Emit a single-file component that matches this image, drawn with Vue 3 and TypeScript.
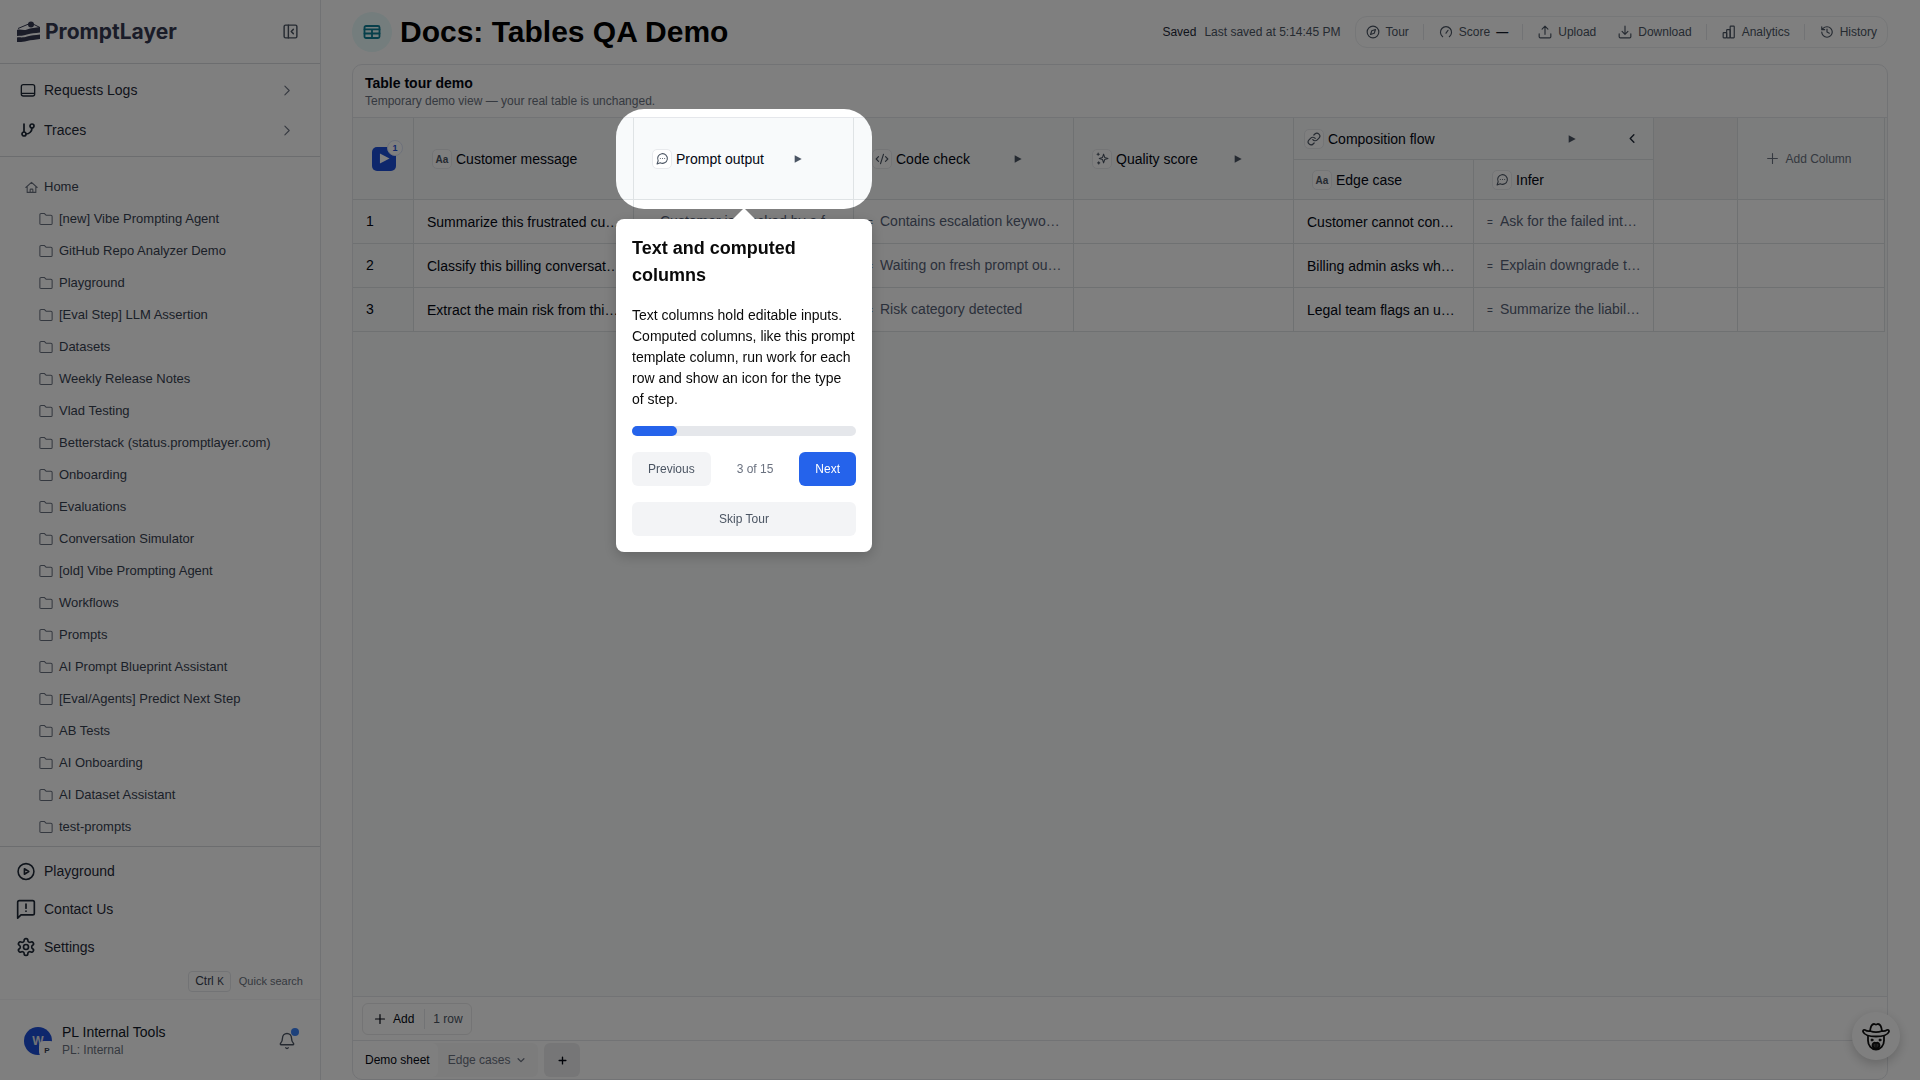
<script setup lang="ts">
import { h, type FunctionalComponent } from 'vue'

const glyphs: Record<string, string> = {
  collapse: '<rect x="3" y="3" width="18" height="18" rx="2"/><path d="M9 3v18M16 9l-3 3 3 3"/>',
  logs: '<rect x="2" y="4" width="20" height="17" rx="3"/><path d="M2.500 17h19"/>',
  branch: '<path d="M6 3v12M18 9a9 9 0 0 1-9 9"/><circle cx="18" cy="6" r="3"/><circle cx="6" cy="18" r="3"/>',
  right: '<path d="m9 4 8 8-8 8"/>',
  left: '<path d="m15 4-8 8 8 8"/>',
  down: '<path d="m5 9 7 7 7-7"/>',
  home: '<path d="m1.500 12 10.500-9.500L22.500 12M4 10v11h16V10M9.500 21v-5a1 1 0 0 1 1-1h3a1 1 0 0 1 1 1v5"/>',
  folder: '<path d="M1.500 19.500v-15a2 2 0 0 1 2-2h5.500l3 3h8.500a2 2 0 0 1 2 2v12a2 2 0 0 1-2 2h-17a2 2 0 0 1-2-2z"/>',
  playCircle: '<circle cx="12" cy="12" r="10"/><path d="m10 8.500 5.500 3.500-5.500 3.500z"/>',
  contact: '<path d="M22 17a2 2 0 0 1-2 2H6l-4 4V4a2 2 0 0 1 2-2h16a2 2 0 0 1 2 2zM12 6v5M12 14.500v.1"/>',
  gear: '<path d="M12.220 2h-.44a2 2 0 0 0-2 2v.18a2 2 0 0 1-1 1.730l-.43.25a2 2 0 0 1-2 0l-.15-.08a2 2 0 0 0-2.730.73l-.22.38a2 2 0 0 0 .73 2.730l.15.1a2 2 0 0 1 1 1.720v.51a2 2 0 0 1-1 1.740l-.15.09a2 2 0 0 0-.73 2.730l.22.38a2 2 0 0 0 2.730.73l.15-.08a2 2 0 0 1 2 0l.43.25a2 2 0 0 1 1 1.730V20a2 2 0 0 0 2 2h.44a2 2 0 0 0 2-2v-.18a2 2 0 0 1 1-1.730l.43-.25a2 2 0 0 1 2 0l.15.08a2 2 0 0 0 2.730-.73l.22-.39a2 2 0 0 0-.73-2.730l-.15-.08a2 2 0 0 1-1-1.740v-.5a2 2 0 0 1 1-1.740l.15-.09a2 2 0 0 0 .73-2.730l-.22-.38a2 2 0 0 0-2.730-.73l-.15.08a2 2 0 0 1-2 0l-.43-.25a2 2 0 0 1-1-1.730V4a2 2 0 0 0-2-2z"/><circle cx="12" cy="12" r="3"/>',
  bell: '<path d="M10.300 21a1.940 1.940 0 0 0 3.400 0M3.300 15.300A1 1 0 0 0 4 17h16a1 1 0 0 0 .7-1.700C19.400 14 18 12.500 18 8A6 6 0 0 0 6 8c0 4.500-1.400 6-2.700 7.300"/>',
  compass: '<circle cx="12" cy="12" r="10"/><path d="m16.200 7.800-2.100 6.300-6.300 2.100 2.100-6.300z"/>',
  gauge: '<path d="m12 14 3.500-5M6.300 20a9.500 9.500 0 1 1 11.400 0"/>',
  upload: '<path d="M12 16V2M7 7l5-5 5 5M2 15v5a2 2 0 0 0 2 2h16a2 2 0 0 0 2-2v-5"/>',
  download: '<path d="M12 2v14M7 11l5 5 5-5M2 15v5a2 2 0 0 0 2 2h16a2 2 0 0 0 2-2v-5"/>',
  chart: '<rect x="2" y="13" width="6" height="9" rx="1"/><rect x="8" y="8" width="6" height="14" rx="1"/><rect x="14" y="2" width="7" height="20" rx="1"/>',
  history: '<path d="M3 12a9 9 0 1 0 9-9 9.750 9.750 0 0 0-6.740 2.740L3 8M3 3v5h5M12 7v5l4 2"/>',
  chat: '<path d="M7.900 20A9 9 0 1 0 4 16.100L2 22zM8 12h.01M12 12h.01M16 12h.01"/>',
  code: '<path d="m18 16 4-4-4-4M6 8l-4 4 4 4M14.500 4l-5 16"/>',
  sparkle: '<path d="M14 4l2 6 6 2-6 2-2 6-2-6-6-2 6-2zM4 2v4M2 4h4M5 18v4M3 20h4"/>',
  link: '<path d="M10 13a5 5 0 0 0 7.540.54l3-3a5 5 0 0 0-7.070-7.070l-1.720 1.710M14 11a5 5 0 0 0-7.540-.54l-3 3a5 5 0 0 0 7.070 7.070l1.710-1.710"/>',
  plus: '<path d="M12 3v18M3 12h18"/>',
  play: '<path d="M2 1v22l21-11z" fill="currentColor" stroke="none"/>',
  table: '<rect x="2" y="4" width="20" height="16" rx="2"/><path d="M2 8.500h20M2 14h20M12 8.500V20"/>',
}

interface IconProps { name: string; size: number; weight?: number }

const Icon: FunctionalComponent<IconProps> = (props) =>
  h('svg', {
    width: props.size,
    height: props.size,
    viewBox: '0 0 24 24',
    fill: 'none',
    stroke: 'currentColor',
    'stroke-width': props.weight ?? 2,
    'stroke-linecap': 'round',
    'stroke-linejoin': 'round',
    'aria-hidden': 'true',
    innerHTML: glyphs[props.name],
  })
Icon.props = ['name', 'size', 'weight']

const folders: string[] = [
  '[new] Vibe Prompting Agent', 'GitHub Repo Analyzer Demo', 'Playground', '[Eval Step] LLM Assertion',
  'Datasets', 'Weekly Release Notes', 'Vlad Testing', 'Betterstack (status.promptlayer.com)',
  'Onboarding', 'Evaluations', 'Conversation Simulator', '[old] Vibe Prompting Agent', 'Workflows',
  'Prompts', 'AI Prompt Blueprint Assistant', '[Eval/Agents] Predict Next Step', 'AB Tests',
  'AI Onboarding', 'AI Dataset Assistant', 'test-prompts',
]

const rows = [
  { message: 'Summarize this frustrated cu…', output: 'Customer is blocked by a f…', check: 'Contains escalation keywo…', edge: 'Customer cannot con…', infer: 'Ask for the failed int…' },
  { message: 'Classify this billing conversat…', output: '', check: 'Waiting on fresh prompt ou…', edge: 'Billing admin asks wh…', infer: 'Explain downgrade t…' },
  { message: 'Extract the main risk from thi…', output: '', check: 'Risk category detected', edge: 'Legal team flags an u…', infer: 'Summarize the liabil…' },
]

const step = 3
const total = 15
</script>

<template>
  <div class="app">
    <aside class="sidebar">
      <header class="brand">
        <a href="#" class="logo">
          <svg class="cake" width="24" height="22" viewBox="0 0 24 22" aria-hidden="true">
            <path d="M1 7.500 14 2l9 4.500" fill="none" stroke="currentColor" />
            <circle cx="14" cy="3.500" r="3" fill="currentColor" />
            <path d="M0 9c3-1.500 6 1 10-.5S18 7 23 6v5.500c-5 1-9 .5-13 2S3 14.500 0 15z" fill="currentColor" />
            <path d="M0 16.500c3-.5 6 .5 10-1s8-1 13-2V18c-5 1-9 .8-13 2s-7 1-10 1z" fill="currentColor" />
          </svg>
          <span>PromptLayer</span>
        </a>
        <button class="ghost" aria-label="Collapse sidebar"><Icon name="collapse" :size="17" /></button>
      </header>

      <nav class="primary">
        <a href="#" class="nav-row"><Icon name="logs" :size="16" /><span>Requests Logs</span><Icon class="chev" name="right" :size="13" /></a>
        <a href="#" class="nav-row"><Icon name="branch" :size="16" :weight="2.600" /><span>Traces</span><Icon class="chev" name="right" :size="13" /></a>
      </nav>

      <nav class="tree">
        <a href="#" class="tree-row root"><Icon name="home" :size="13" /><span>Home</span></a>
        <a v-for="f in folders" :key="f" href="#" class="tree-row"><Icon name="folder" :size="14" :weight="1.800" /><span>{{ f }}</span></a>
      </nav>

      <nav class="secondary">
        <a href="#" class="side-row"><Icon name="playCircle" :size="19" /><span>Playground</span></a>
        <a href="#" class="side-row"><Icon name="contact" :size="20" /><span>Contact Us</span></a>
        <a href="#" class="side-row"><Icon name="gear" :size="20" /><span>Settings</span></a>
        <div class="search"><kbd>Ctrl <small>K</small></kbd><span>Quick search</span></div>
      </nav>

      <footer class="account">
        <div class="avatar">W<span class="avatar-tag">P</span></div>
        <div class="who"><strong>PL Internal Tools</strong><span>PL: Internal</span></div>
        <button class="ghost bell" aria-label="Notifications"><Icon name="bell" :size="18" :weight="1.800" /><i></i></button>
      </footer>
    </aside>

    <main class="main">
      <header class="topbar">
        <span class="sheet-icon"><Icon name="table" :size="18" :weight="2.400" /></span>
        <h1>Docs: Tables QA Demo</h1>
        <span class="saved"><b>Saved</b><span>Last saved at 5:14:45 PM</span></span>
        <div class="toolbar">
          <button><Icon name="compass" :size="14" />Tour</button>
          <hr />
          <button><Icon name="gauge" :size="14" />Score <b>—</b></button>
          <hr />
          <button><Icon name="upload" :size="14" />Upload</button>
          <button><Icon name="download" :size="14" />Download</button>
          <hr />
          <button><Icon name="chart" :size="14" />Analytics</button>
          <hr />
          <button><Icon name="history" :size="14" />History</button>
        </div>
      </header>

      <section class="panel">
        <div class="panel-title">
          <h2>Table tour demo</h2>
          <p>Temporary demo view — your real table is unchanged.</p>
        </div>

        <div class="grid-area">
          <table>
            <colgroup>
              <col class="c-num" /><col class="c-wide" /><col class="c-wide" /><col class="c-wide" /><col class="c-wide" />
              <col class="c-mid" /><col class="c-mid" /><col class="c-gap" /><col />
            </colgroup>
            <thead>
              <tr class="h-top">
                <th rowspan="2">
                  <button class="run-all" aria-label="Run all"><Icon name="play" :size="11" /><span>1</span></button>
                </th>
                <th rowspan="2"><div class="head"><span class="kind">Aa</span><span>Customer message</span></div></th>
                <th rowspan="2" class="anchor">
                  <div class="head"><span class="kind"><Icon name="chat" :size="13" /></span><span>Prompt output</span><button class="run run-a" aria-label="Run column"><Icon name="play" :size="8" /></button></div>
                  <div class="spotlight"></div>
                  <div class="tour" role="dialog" aria-labelledby="tour-title">
                    <h3 id="tour-title">Text and computed columns</h3>
                    <p>Text columns hold editable inputs. Computed columns, like this prompt template column, run work for each row and show an icon for the type of step.</p>
                    <div class="progress"><div :style="{ width: (step / total) * 100 + '%' }"></div></div>
                    <div class="tour-nav">
                      <button>Previous</button>
                      <span>{{ step }} of {{ total }}</span>
                      <button class="next">Next</button>
                    </div>
                    <button class="skip">Skip Tour</button>
                  </div>
                </th>
                <th rowspan="2"><div class="head"><span class="kind"><Icon name="code" :size="14" /></span><span>Code check</span><button class="run run-a" aria-label="Run column"><Icon name="play" :size="8" /></button></div></th>
                <th rowspan="2"><div class="head"><span class="kind"><Icon name="sparkle" :size="13" /></span><span>Quality score</span><button class="run run-a" aria-label="Run column"><Icon name="play" :size="8" /></button></div></th>
                <th colspan="2"><div class="head group"><span class="kind"><Icon name="link" :size="14" /></span><span>Composition flow</span><button class="run run-b" aria-label="Run group"><Icon name="play" :size="8" /></button><button class="run fold" aria-label="Collapse group"><Icon name="left" :size="11" :weight="3" /></button></div></th>
                <th rowspan="2" class="blank"></th>
                <th rowspan="2"><button class="add-col"><Icon name="plus" :size="13" />Add Column</button></th>
              </tr>
              <tr class="h-sub">
                <th><div class="head"><span class="kind">Aa</span><span>Edge case</span></div></th>
                <th><div class="head"><span class="kind"><Icon name="chat" :size="13" /></span><span>Infer</span></div></th>
              </tr>
            </thead>
            <tbody>
              <tr v-for="(r, i) in rows" :key="i">
                <td class="num">{{ i + 1 }}</td>
                <td><div class="cell">{{ r.message }}</div></td>
                <td><div v-if="r.output" class="cell calc"><i>=</i>{{ r.output }}</div></td>
                <td><div class="cell calc"><i>=</i>{{ r.check }}</div></td>
                <td></td>
                <td><div class="cell">{{ r.edge }}</div></td>
                <td><div class="cell calc"><i>=</i>{{ r.infer }}</div></td>
                <td></td>
                <td></td>
              </tr>
            </tbody>
          </table>
        </div>

        <div class="panel-foot">
          <div class="add-group">
            <button><Icon name="plus" :size="12" :weight="2.400" />Add</button>
            <span>1 row</span>
          </div>
        </div>
        <div class="tabs">
          <div class="tab-group">
            <button class="active">Demo sheet</button>
            <button>Edge cases<Icon name="down" :size="10" :weight="3" /></button>
          </div>
          <button class="tab-add" aria-label="Add sheet"><Icon name="plus" :size="9" :weight="3.600" /></button>
        </div>
      </section>
    </main>

    <button class="fab" aria-label="Open assistant">
      <svg width="30" height="30" viewBox="0 0 30 30" fill="none" stroke="currentColor" stroke-width="1.800" stroke-linejoin="round" stroke-linecap="round" aria-hidden="true">
        <path d="M9 10c.5-4 1.500-7 4-7 1 0 1 .6 2 .6s1-.6 2-.6c2.500 0 3.500 3 4 7" />
        <path d="M9 10c-2 .2-3.500 0-5-1-1.500-.6-2.500.6-1.800 2C3.500 14 8 15.500 15 15.500S26.500 14 27.800 11c.7-1.400-.3-2.600-1.800-2-1.500 1-3 1.200-5 1-3.500 1.400-8.500 1.400-12 0z" />
        <path d="M7 15.500v4c0 5 3.500 9 8 9s8-4 8-9v-4" />
        <path d="M15 22c-2.200-.8-3.500.6-3.500 2.500.5 2.300 1.800 3.500 3.500 3.500s3-1.200 3.500-3.500c0-1.900-1.300-3.300-3.500-2.500z" fill="#444444" />
        <path d="M15 23v4" stroke-width="1" />
        <circle cx="11" cy="19" r="1" fill="currentColor" stroke-width="1" />
        <circle cx="19" cy="19" r="1" fill="currentColor" stroke-width="1" />
      </svg>
    </button>
  </div>
</template>

<style>
body {
  margin: 0;
}
</style>

<style scoped>
* {
  box-sizing: border-box;
}

.app {
  display: flex;
  min-height: 100vh;
  background: #ffffff;
  color: #030712;
  font-family: "Liberation Sans", Arial, sans-serif;
  font-size: 14px;
  line-height: 20px;
}

.app a {
  color: inherit;
  text-decoration: none;
}

.app button {
  margin: 0;
  padding: 0;
  border: 0;
  background: none;
  color: inherit;
  font: inherit;
  cursor: pointer;
}

svg {
  flex: none;
  display: block;
}

/* Sidebar */
.sidebar {
  display: flex;
  flex-direction: column;
  flex: none;
  width: 321px;
  border-right: 1px solid #e2e4e8;
}

.brand {
  display: flex;
  align-items: center;
  justify-content: space-between;
  height: 64px;
  padding: 0 21px 0 17px;
  border-bottom: 1px solid #d9dbdf;
}

.logo {
  display: flex;
  align-items: center;
  gap: 4px;
  font-family: Inter, "Liberation Sans", sans-serif;
  font-size: 21px;
  font-weight: 700;
}

.app .logo {
  color: #343851;
}

.ghost {
  display: grid;
  place-items: center;
}

.app .ghost {
  color: #4b5563;
}

.primary {
  padding: 6px 0;
  border-bottom: 1px solid #d9dbdf;
}

.nav-row {
  display: flex;
  align-items: center;
  gap: 8px;
  height: 40px;
  padding: 0 27px 0 20px;
}

.nav-row span {
  flex: 1;
}

.chev {
  color: #6b7280;
}

.tree {
  flex: 1;
  padding: 14px 0 2px;
}

.tree-row {
  display: flex;
  align-items: center;
  gap: 6px;
  height: 32px;
  padding-left: 39px;
  font-size: 13px;
}

.app .tree-row {
  color: #374151;
}

.tree-row.root {
  padding-left: 25px;
}

.tree-row svg {
  color: #6b7280;
}

.secondary {
  padding: 5px 0 8px;
  border-top: 1px solid #d9dbdf;
}

.side-row {
  display: flex;
  align-items: center;
  gap: 8px;
  height: 38px;
  padding-left: 16px;
}

.app .side-row,
.app .nav-row {
  color: #1f2937;
}

.side-row svg {
  width: 20px;
}

.search {
  display: flex;
  align-items: center;
  justify-content: flex-end;
  gap: 8px;
  height: 20px;
  margin-top: 5px;
  padding-right: 17px;
  color: #6b7280;
  font-size: 11px;
}

kbd {
  padding: 0 6px;
  border: 1px solid #e5e7eb;
  border-radius: 4px;
  color: #374151;
  font-family: inherit;
  font-size: 12px;
  line-height: 18px;
}

kbd small {
  font-size: 10px;
}

.account {
  display: flex;
  align-items: center;
  height: 81px;
  padding: 1px 24px 0;
  border-top: 1px solid #f5f5f6;
}

.avatar {
  position: relative;
  display: grid;
  place-items: center;
  width: 28px;
  height: 28px;
  border-radius: 50%;
  background: #1d4ed8;
  color: #e5e7eb;
  font-size: 12px;
  font-weight: 700;
}

.avatar-tag {
  position: absolute;
  right: -3px;
  bottom: -2px;
  display: grid;
  place-items: center;
  width: 16px;
  height: 16px;
  border-radius: 5px;
  background: #ffffff;
  color: #374151;
  font-size: 8px;
}

.who {
  display: flex;
  flex: 1;
  flex-direction: column;
  margin-left: 10px;
}

.who strong {
  color: #111827;
  font-weight: 400;
  line-height: 18px;
}

.who span {
  color: #6b7280;
  font-size: 12px;
  line-height: 18px;
}

.bell {
  position: relative;
}

.bell i {
  position: absolute;
  top: -4px;
  right: -3px;
  width: 8px;
  height: 8px;
  border-radius: 50%;
  background: #3b82f6;
}

/* Page header */
.main {
  display: flex;
  flex: 1;
  flex-direction: column;
  min-width: 0;
  padding: 0 32px 0 31px;
}

.topbar {
  display: flex;
  align-items: center;
  height: 64px;
}

.sheet-icon {
  display: grid;
  place-items: center;
  width: 40px;
  height: 40px;
  border-radius: 50%;
  background: #e8fafa;
  color: #0e7f96;
}

h1 {
  flex: 1;
  margin: 0 0 0 8px;
  color: #000000;
  font-size: 30px;
  line-height: 36px;
}

.saved {
  display: flex;
  gap: 8px;
  margin-right: 14px;
  color: #4b5563;
  font-size: 12px;
}

.saved b {
  color: #1f2937;
  font-weight: 400;
}

.toolbar {
  display: flex;
  align-items: center;
  height: 32px;
  border: 1px solid #eceef0;
  border-radius: 12px;
  color: #4b5563;
  font-size: 12px;
}

.toolbar button {
  display: flex;
  align-items: center;
  gap: 6px;
  height: 28px;
}

.app .toolbar button {
  padding: 0 10px;
}

.toolbar button b {
  color: #111827;
}

.toolbar hr {
  width: 1px;
  height: 16px;
  margin: 0 5px 0 4px;
  border: 0;
  background: #e5e7eb;
}

.toolbar button + button {
  margin-left: 2px;
}

/* Table panel */
.panel {
  display: flex;
  flex: 1;
  flex-direction: column;
  border: 1px solid #e5e7eb;
  border-radius: 10px;
}

.panel-title {
  height: 53px;
  padding: 8px 12px 0;
  border-bottom: 1px solid #e5e7eb;
}

.panel-title h2 {
  margin: 0;
  font-size: 14px;
  line-height: 20px;
}

.panel-title p {
  margin: 0;
  color: #6b7280;
  font-size: 12px;
  line-height: 16px;
}

.grid-area {
  flex: 1;
  padding-right: 2px;
  background: #f8fafa;
}

table {
  width: 100%;
  border-spacing: 0;
  table-layout: fixed;
}

.c-num {
  width: 61px;
}

.c-wide {
  width: 220px;
}

.c-mid {
  width: 180px;
}

.c-gap {
  width: 84px;
}

th,
td {
  padding: 0;
  border-right: 1px solid #dfe3e5;
  border-bottom: 1px solid #dfe3e5;
  text-align: left;
}

th {
  background: #f8fafb;
  font-weight: 400;
}

td {
  height: 44px;
  padding-top: 1px;
  background: #ffffff;
}

.h-top {
  height: 42px;
}

.h-sub {
  height: 40px;
}

th.blank {
  background: #f2f2f2;
}

td.num {
  padding: 0 0 1px 13px;
  background: #f8fafb;
}

.head {
  display: flex;
  align-items: center;
  gap: 4px;
  padding-left: 18px;
}

.head.group {
  padding-left: 10px;
}

.kind {
  display: grid;
  place-items: center;
  width: 20px;
  height: 20px;
  border: 1px solid #e8eaed;
  border-radius: 5px;
  background: #ffffff;
  color: #4b5563;
  font-size: 10px;
  font-weight: 700;
}

.run {
  display: grid;
  place-items: center;
  width: 16px;
  height: 16px;
}

.app .run {
  color: #4b5563;
}

.app .run-a {
  margin: 0 47px 0 auto;
}

.app .run-b {
  margin-left: auto;
}

.app .fold {
  margin: 0 13px 0 40px;
  color: #1f2937;
}

.run-all {
  position: relative;
  display: grid;
  place-items: center;
  width: 24px;
  height: 24px;
}

.app .run-all {
  margin-left: 19px;
  border-radius: 5px;
  background: #1d4ed8;
  color: #ffffff;
}

.run-all span {
  position: absolute;
  top: -7px;
  right: -7px;
  width: 16px;
  height: 16px;
  border: 1px solid #dbe3f5;
  border-radius: 50%;
  background: #ffffff;
  color: #1d4ed8;
  font-size: 9px;
  font-weight: 700;
  line-height: 14px;
}

.add-col {
  display: flex;
  align-items: center;
  justify-content: center;
  gap: 6px;
  width: 100%;
}

.app .add-col {
  padding-right: 4px;
  color: #6b7280;
  font-size: 12px;
}

.cell {
  padding: 0 0 0 13px;
  overflow: hidden;
  white-space: nowrap;
}

.cell.calc {
  color: #566176;
}

.calc i {
  display: inline-block;
  width: 13px;
  font-size: 10px;
  font-style: normal;
}

.panel-foot {
  display: flex;
  align-items: center;
  height: 44px;
  padding-left: 9px;
  border-top: 1px solid #e5e7eb;
}

.add-group {
  display: flex;
  align-items: center;
  height: 32px;
  border: 1px solid #e8e8ea;
  border-radius: 6px;
  font-size: 12px;
}

.add-group button {
  display: flex;
  align-items: center;
  gap: 7px;
}

.app .add-group button {
  padding: 0 10px 0 11px;
}

.add-group span {
  padding: 0 8px;
  border-left: 1px solid #e5e7eb;
  color: #4b5563;
}

.tabs {
  display: flex;
  align-items: center;
  gap: 6px;
  height: 39px;
  padding-left: 4px;
  border-top: 1px solid #e5e7eb;
  font-size: 12px;
}

.tab-group {
  display: flex;
  border-radius: 6px;
  background: #f8f8f9;
}

.tab-group button {
  display: flex;
  align-items: center;
  gap: 6px;
  height: 34px;
}

.app .tab-group button {
  padding: 0 12px 0 10px;
  color: #6b7280;
}

.app .tab-group .active {
  padding: 0 8px;
  border-radius: 6px;
  background: #ffffff;
  color: #030712;
}

.tab-add {
  display: grid;
  place-items: center;
  width: 36px;
  height: 34px;
}

.app .tab-add {
  border-radius: 6px;
  background: #ededee;
}

/* Assistant launcher */
.fab {
  position: fixed;
  right: 20px;
  bottom: 20px;
  display: grid;
  place-items: center;
  width: 48px;
  height: 48px;
}

.app .fab {
  border-radius: 50%;
  background: #ffffff;
  box-shadow: 0 4px 12px rgba(0, 0, 0, 0.2);
  color: #111111;
}

/* Guided tour */
.anchor {
  position: relative;
}

.spotlight {
  position: absolute;
  z-index: 20;
  inset: -9px -19px -10px -18px;
  border-radius: 28px;
  box-shadow: 0 0 0 9999px rgba(0, 0, 0, 0.5);
  pointer-events: none;
}

.tour {
  position: absolute;
  z-index: 21;
  top: calc(100% + 20px);
  left: -18px;
  right: -19px;
  padding: 16px;
  border-radius: 8px;
  background: #ffffff;
  box-shadow: 0 4px 14px rgba(0, 0, 0, 0.2);
  color: #0a0a0a;
  white-space: normal;
}

.tour::before {
  content: "";
  position: absolute;
  bottom: 100%;
  left: 50%;
  margin-left: -11px;
  border: 11px solid transparent;
  border-top: 0;
  border-bottom-color: #ffffff;
}

.tour h3 {
  margin: 0 0 16px;
  font-size: 18px;
  line-height: 27px;
}

.tour p {
  margin: 0 0 16px;
  line-height: 21px;
}

.progress {
  height: 10px;
  margin-bottom: 16px;
  border-radius: 5px;
  background: #e5e7eb;
}

.progress div {
  height: 10px;
  border-radius: 5px;
  background: #2563eb;
}

.tour-nav {
  display: flex;
  align-items: center;
  justify-content: space-between;
  margin-bottom: 16px;
  color: #6b7280;
  font-size: 12px;
}

.app .tour .run,
.app .tour button {
  height: 34px;
  padding: 0 16px;
  border-radius: 6px;
  background: #f3f4f6;
  color: #4b5563;
  font-size: 12px;
}

.app .tour .next {
  background: #2563eb;
  color: #ffffff;
}

.app .tour .skip {
  display: block;
  width: 100%;
}
</style>
